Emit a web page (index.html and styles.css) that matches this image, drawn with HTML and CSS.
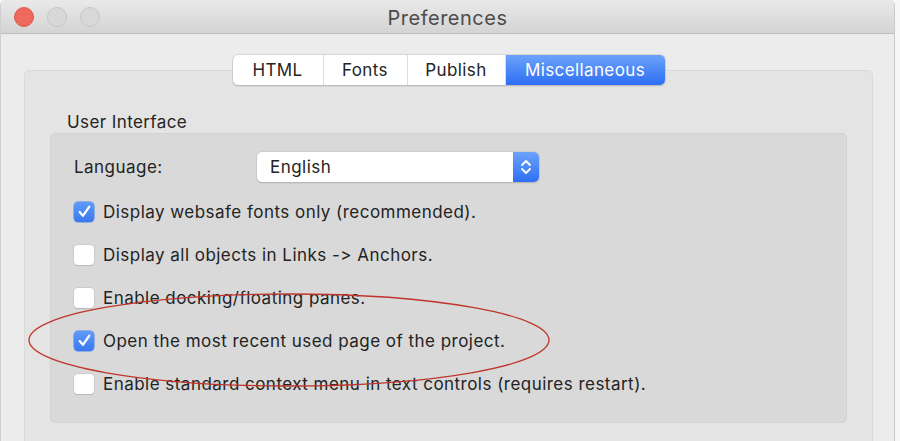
FILE: index.html
```html
<!DOCTYPE html>
<html>
<head>
<meta charset="utf-8">
<link rel="stylesheet" href="styles.css">
</head>
<body>
<div class="window">
  <div class="titlebar">
    <div class="lights">
      <span class="light red"></span>
      <span class="light"></span>
      <span class="light"></span>
    </div>
    <div class="title">Preferences</div>
  </div>
  <div class="content">
    <div class="segmented">
      <div class="seg">HTML</div>
      <div class="seg">Fonts</div>
      <div class="seg">Publish</div>
      <div class="seg active">Miscellaneous</div>
    </div>
    <div class="tabbox">
      <div class="group-label">User Interface</div>
      <div class="group">
        <div class="row lang-row">
          <span class="lang-label">Language:</span>
          <div class="popup">
            <span class="popup-text">English</span>
            <span class="popup-arrows">
              <svg width="14" height="20" viewBox="0 0 14 20"><path d="M3 8 L7 4 L11 8 M3 12 L7 16 L11 12" fill="none" stroke="#fff" stroke-width="1.8" stroke-linecap="round" stroke-linejoin="round"/></svg>
            </span>
          </div>
        </div>
        <div class="row"><span class="cb checked"><svg width="15" height="15" viewBox="0 0 14 14"><path d="M2.5 7.5 L5.5 11 L11.5 2.5" fill="none" stroke="#fff" stroke-width="2.1" stroke-linecap="round" stroke-linejoin="round"/></svg></span><span class="cb-text">Display websafe fonts only (recommended).</span></div>
        <div class="row"><span class="cb"></span><span class="cb-text">Display all objects in Links -&gt; Anchors.</span></div>
        <div class="row"><span class="cb"></span><span class="cb-text">Enable docking/floating panes.</span></div>
        <div class="row"><span class="cb checked"><svg width="15" height="15" viewBox="0 0 14 14"><path d="M2.5 7.5 L5.5 11 L11.5 2.5" fill="none" stroke="#fff" stroke-width="2.1" stroke-linecap="round" stroke-linejoin="round"/></svg></span><span class="cb-text">Open the most recent used page of the project.</span></div>
        <div class="row"><span class="cb"></span><span class="cb-text">Enable standard context menu in text controls (requires restart).</span></div>
      </div>
    </div>
  </div>
  <svg class="annotation" width="900" height="441" viewBox="0 0 900 441"><ellipse cx="288" cy="340" rx="260" ry="46" fill="none" stroke="#c0352b" stroke-width="1.3"/></svg>
</div>
</body>
</html>
```
FILE: styles.css
```css
html, body {
  margin: 0;
  padding: 0;
  background: #f7f7f7;
  height: 441px;
  overflow: hidden;
}
body {
  font-family: "Inter", "Open Sans", "Liberation Sans", sans-serif;
  font-variant-ligatures: none;
  font-feature-settings: "calt" 0, "liga" 0;
  color: #232323;
}
.window {
  position: relative;
  width: 895px;
  height: 441px;
  background: #ececec;
  border-right: 1px solid #c9c9c9;
  border-left: 1px solid #cfcfcf;
  box-sizing: border-box;
  border-top-right-radius: 6px;
  border-top-left-radius: 6px;
  overflow: hidden;
}
.titlebar {
  height: 33px;
  background: linear-gradient(#e9e9e9, #d4d4d4);
  border-bottom: 1px solid #bdbdbd;
  display: flex;
  align-items: center;
  position: relative;
}
.lights {
  display: flex;
  gap: 13px;
  padding-left: 13px;
}
.light {
  width: 18px;
  height: 18px;
  border-radius: 50%;
  border: 1px solid #c6c6c6;
  background: #d8d8d8;
}
.light.red {
  background: #ee6a5f;
  border-color: #e0574c;
}
.title {
  position: absolute;
  left: 0;
  right: 0;
  text-align: center;
  font-size: 20px;
  letter-spacing: 0.5px;
  color: #4c4c4c;
  top: 6px;
}
.content {
  display: flex;
  flex-direction: column;
  align-items: center;
  padding: 21px 21px 0 23px;
}
.segmented {
  display: flex;
  height: 30px;
  background: #fff;
  border-radius: 5px;
  box-shadow: 0 0 0 0.5px #bfbfbf, 0 1px 1.5px rgba(0,0,0,0.25);
  position: relative;
  z-index: 2;
  margin-bottom: -15px;
  overflow: hidden;
}
.seg {
  display: flex;
  align-items: center;
  justify-content: center;
  font-size: 17px;
  letter-spacing: 0.4px;
  color: #232323;
  border-right: 1px solid #dcdcdc;
}
.seg:nth-child(1) { width: 90px; }
.seg:nth-child(2) { width: 83px; }
.seg:nth-child(3) { width: 97px; }
.seg.active {
  width: 159px;
  border-right: none;
  color: #fff;
  background: linear-gradient(#6ba3fa, #2e6ef4);
}
.tabbox {
  align-self: stretch;
  background: #e4e4e4;
  border: 1px solid #dadada;
  border-radius: 5px;
  height: 400px;
  padding: 40px 25px 0 25px;
  box-sizing: border-box;
}
.group-label {
  font-size: 17px;
  letter-spacing: 0.4px;
  padding-left: 17px;
  height: 22px;
  line-height: 22px;
}
.group {
  background: #d9d9d9;
  border: 1px solid #d2d2d2;
  border-radius: 5px;
  height: 290px;
  box-sizing: border-box;
  padding: 18px 0 0 23px;
  display: flex;
  flex-direction: column;
}
.row {
  display: flex;
  align-items: center;
  height: 43px;
  font-size: 17px;
  letter-spacing: 0.47px;
}
.lang-row {
  height: 30px;
  margin-bottom: 8px;
}
.lang-label {
  width: 183px;
}
.popup {
  width: 282px;
  height: 30px;
  box-sizing: border-box;
  background: #fff;
  border-radius: 5px;
  box-shadow: 0 0 0 0.5px #c2c2c2, 0 1px 1.5px rgba(0,0,0,0.25);
  display: flex;
  align-items: center;
  overflow: hidden;
}
.popup-text {
  flex: 1;
  padding-left: 13px;
}
.popup-arrows {
  width: 26px;
  height: 30px;
  background: linear-gradient(#6ba3fa, #2e6ef4);
  display: flex;
  align-items: center;
  justify-content: center;
}
.cb {
  width: 20px;
  height: 20px;
  box-sizing: border-box;
  border-radius: 4px;
  background: #fff;
  box-shadow: 0 0 0 0.5px #c4c4c4, 0 0.5px 1px rgba(0,0,0,0.2);
  margin-right: 9px;
  display: flex;
  align-items: center;
  justify-content: center;
  flex: none;
}
.cb.checked {
  background: linear-gradient(#609bf7, #3a78ef);
  box-shadow: 0 0 0 0.5px #4a83ea;
}
.annotation {
  position: absolute;
  left: 0;
  top: 0;
  pointer-events: none;
}
```
